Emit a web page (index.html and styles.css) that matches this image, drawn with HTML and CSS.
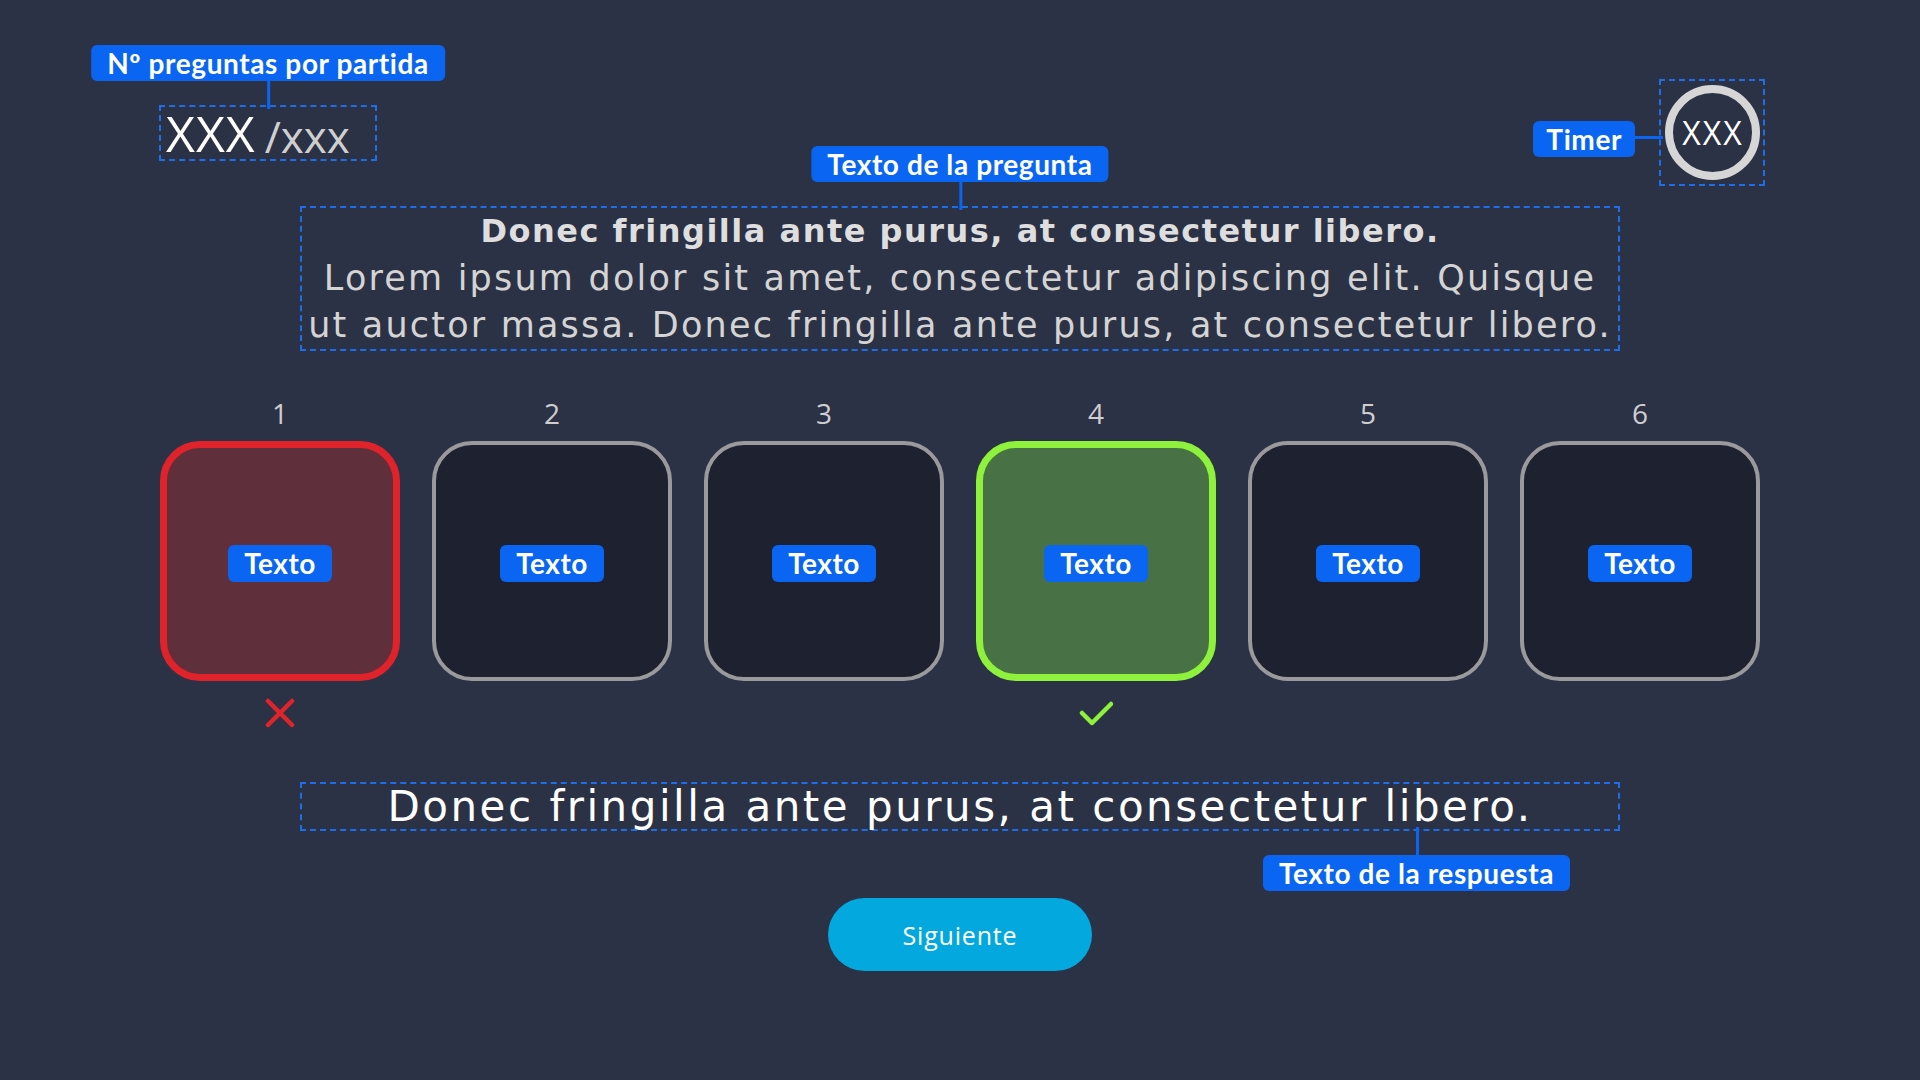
FILE: index.html
```html
<!DOCTYPE html>
<html lang="es">
  <head>
    <meta charset="UTF-8" />
    <meta name="viewport" content="width=device-width, initial-scale=1.0" />
    <title>Partida</title>
    <link rel="stylesheet" href="styles.css">
  </head>
  <body>
    <div class="screen">
      <div class="top-bar">
        <!-- Question counter -->
        <div class="counter note-box">
          <span class="note note-top">Nº preguntas por partida</span>
          <span class="counter-current">XXX</span><span class="counter-total">/xxx</span>
        </div>

        <!-- Timer -->
        <div class="timer note-box">
          <span class="note note-left">Timer</span>
          <div class="timer-ring">XXX</div>
        </div>
      </div>

      <div class="question note-box">
        <span class="note note-top">Texto de la pregunta</span>
        <p class="question-title">Donec fringilla ante purus, at consectetur libero.</p>
        <p class="question-body">
          Lorem ipsum dolor sit amet, consectetur adipiscing elit. Quisque<br />
          ut auctor massa. Donec fringilla ante purus, at consectetur libero.
        </p>
      </div>

      <div class="options">
        <div class="option">
          <span class="option-num">1</span>
          <div class="option-card wrong"><span class="tag">Texto</span></div>
          <div class="option-mark">
            <svg viewBox="0 0 30 30" width="30" height="30">
              <path d="M3 3 L27 27 M27 3 L3 27" stroke="#e0242a" stroke-width="4.5" stroke-linecap="round" fill="none" />
            </svg>
          </div>
        </div>
        <div class="option">
          <span class="option-num">2</span>
          <div class="option-card"><span class="tag">Texto</span></div>
          <div class="option-mark"></div>
        </div>
        <div class="option">
          <span class="option-num">3</span>
          <div class="option-card"><span class="tag">Texto</span></div>
          <div class="option-mark"></div>
        </div>
        <div class="option">
          <span class="option-num">4</span>
          <div class="option-card right"><span class="tag">Texto</span></div>
          <div class="option-mark">
            <svg viewBox="0 0 34 30" width="34" height="30">
              <path d="M3 15 L13 25 L32 6" stroke="#8ef23c" stroke-width="4.5" stroke-linecap="round" stroke-linejoin="round" fill="none" />
            </svg>
          </div>
        </div>
        <div class="option">
          <span class="option-num">5</span>
          <div class="option-card"><span class="tag">Texto</span></div>
          <div class="option-mark"></div>
        </div>
        <div class="option">
          <span class="option-num">6</span>
          <div class="option-card"><span class="tag">Texto</span></div>
          <div class="option-mark"></div>
        </div>
      </div>

      <div class="answer note-box">
        <span class="note note-bottom">Texto de la respuesta</span>
        <p class="answer-text">Donec fringilla ante purus, at consectetur libero.</p>
      </div>

      <button class="next-button">Siguiente</button>
    </div>
  </body>
</html>
```

FILE: styles.css
```css
body {
  margin: 0;
  background-color: #2b3245;
  font-family: "Open Sans", "Noto Sans", sans-serif;
  color: #ffffff;
}

.screen {
  width: 1920px;
  height: 1080px;
  padding-top: 79px;
  box-sizing: border-box;
  display: flex;
  flex-direction: column;
  align-items: center;
}

/* dashed frames with blue annotation tags */
.note-box {
  position: relative;
  border: 2px dashed #1d6ee8;
  box-sizing: border-box;
}

.note {
  position: absolute;
  background-color: #0a66f2;
  color: #ffffff;
  font-family: Lato, "Noto Sans", sans-serif;
  font-weight: 700;
  font-size: 28px;
  letter-spacing: 0.6px;
  line-height: 36px;
  height: 36px;
  padding: 0 16px;
  border-radius: 6px;
  white-space: nowrap;
}

.note::after {
  content: "";
  position: absolute;
  background-color: #0a66f2;
}

.note-top {
  bottom: calc(100% + 26px);
  left: 50%;
  transform: translateX(-50%);
}

.note-top::after {
  top: 100%;
  left: 50%;
  width: 3px;
  height: 28px;
  margin-left: -1px;
}

.note-left {
  right: calc(100% + 26px);
  top: 40px;
  padding: 0 13px;
}

.note-left::after {
  left: 100%;
  top: 50%;
  width: 28px;
  height: 3px;
  margin-top: -3px;
}

.note-bottom {
  top: calc(100% + 26px);
  right: 48px;
}

.note-bottom::after {
  bottom: 100%;
  left: 50%;
  width: 3px;
  height: 28px;
}

/* header */
.top-bar {
  width: 100%;
  display: flex;
  justify-content: space-between;
  align-items: flex-start;
  padding: 0 155px 0 159px;
  box-sizing: border-box;
}

.counter {
  margin-top: 26px;
  width: 218px;
  height: 56px;
  padding-left: 5px;
  display: flex;
  align-items: center;
  white-space: nowrap;
}

.counter-current {
  font-size: 50px;
  color: #ffffff;
  letter-spacing: 1px;
}

.counter-total {
  font-size: 44px;
  color: #cfcfcf;
  margin-left: 9px;
  padding-top: 6px;
}

.timer {
  width: 106px;
  height: 107px;
  display: flex;
  align-items: center;
  justify-content: center;
}

.timer-ring {
  width: 95px;
  height: 95px;
  border: 8px solid #d6d6d6;
  border-radius: 50%;
  box-sizing: border-box;
  display: flex;
  align-items: center;
  justify-content: center;
  font-size: 32px;
  letter-spacing: 2px;
  padding-left: 2px;
  color: #ffffff;
}

/* question */
.question {
  margin-top: 20px;
  width: 1320px;
  text-align: center;
  font-family: "DejaVu Sans", sans-serif;
}

.question p {
  margin: 0;
  line-height: 47px;
}

.question-title {
  font-weight: 700;
  font-size: 32px;
  letter-spacing: 1.5px;
  color: #dedede;
}

.question-body {
  font-size: 35px;
  letter-spacing: 2.2px;
  color: #d4d4d4;
}

/* options */
.options {
  margin-top: 46px;
  display: flex;
  gap: 32px;
}

.option {
  width: 240px;
  display: flex;
  flex-direction: column;
  align-items: center;
}

.option-num {
  font-size: 28px;
  line-height: 32px;
  color: #cfcfcf;
  margin-bottom: 12px;
}

.option-card {
  width: 240px;
  height: 240px;
  box-sizing: border-box;
  border: 4px solid #9a9a9c;
  border-radius: 40px;
  background-color: #1e2230;
  display: flex;
  align-items: center;
  justify-content: center;
}

.option-card.wrong {
  border: 7px solid #e0232a;
  background-color: #5f2f3b;
}

.option-card.right {
  border: 7px solid #8ef23c;
  background-color: #487245;
}

.tag {
  background-color: #0a66f2;
  color: #ffffff;
  font-family: Lato, "Noto Sans", sans-serif;
  font-weight: 700;
  font-size: 28px;
  letter-spacing: 0.5px;
  line-height: 37px;
  height: 37px;
  width: 104px;
  text-align: center;
  border-radius: 6px;
  margin-top: 4px;
}

.option-mark {
  margin-top: 17px;
  height: 30px;
  display: flex;
  justify-content: center;
}

/* answer */
.answer {
  margin-top: 54px;
  width: 1320px;
  height: 49px;
  text-align: center;
}

.answer-text {
  margin: 0;
  font-family: "DejaVu Sans", sans-serif;
  font-size: 42px;
  letter-spacing: 2.5px;
  line-height: 45px;
  color: #ffffff;
}

.next-button {
  margin-top: 67px;
  width: 264px;
  height: 73px;
  border: none;
  border-radius: 37px;
  background-color: #03a8df;
  color: #ffffff;
  font-family: "Open Sans", "Noto Sans", sans-serif;
  font-size: 25px;
  letter-spacing: 0.8px;
  cursor: pointer;
}
```
